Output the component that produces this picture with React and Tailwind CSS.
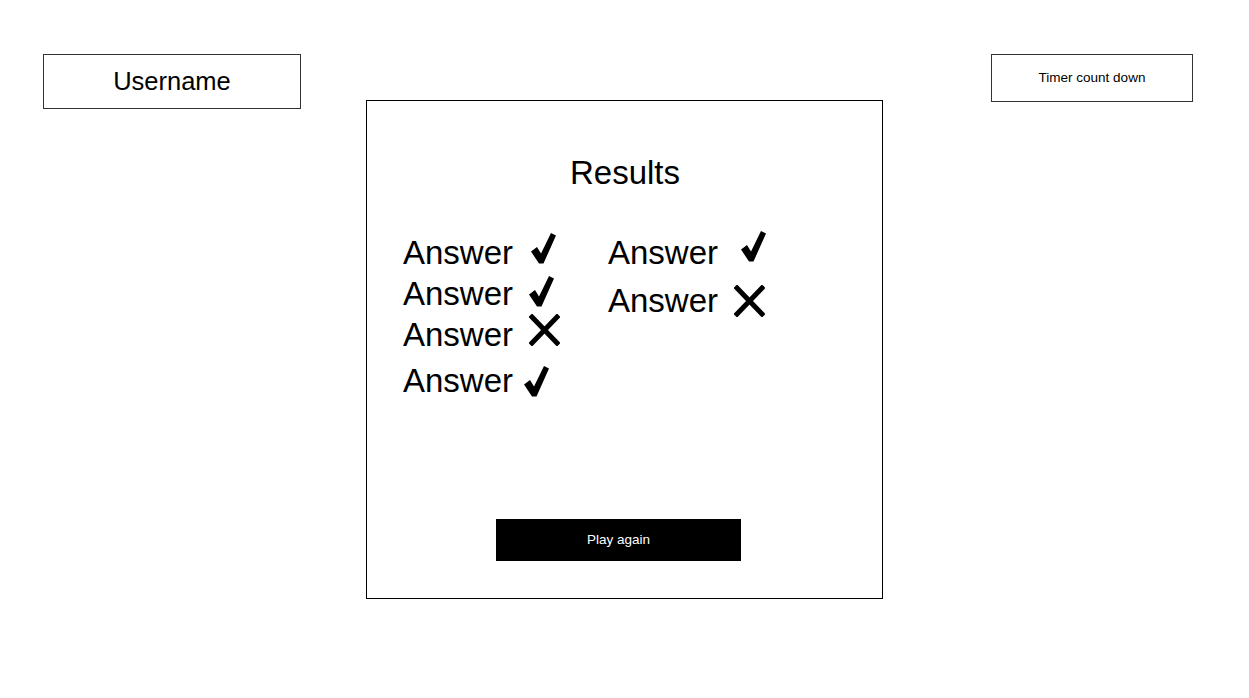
import React from "react";

const Check = () => (
  <svg width="25" height="31" viewBox="0 0 25 31" className="block shrink-0">
    <polygon points="0,18.5 6,14 10,20.5 20,0 25,2.5 12.5,30.5 8,30.5" fill="#000" />
  </svg>
);

const Cross = () => (
  <svg width="31" height="32" viewBox="0 0 31 32" className="block shrink-0">
    <path d="M3 3 L28 29 M28 3 L3 29" stroke="#000" strokeWidth="5" strokeLinecap="square" fill="none" />
  </svg>
);

const Ans = () => (
  <span className="text-[33px] leading-[38px] text-black">Answer</span>
);

export default function App() {
  return (
    <div
      className="w-[1249px] h-[698px] bg-white flex items-start pt-[54px] pl-[43px]"
      style={{ fontFamily: '"Liberation Sans", Arial, sans-serif' }}
    >
      <div className="w-[258px] h-[55px] border border-[#333] flex items-center justify-center shrink-0">
        <span className="text-[25.5px] text-black">Username</span>
      </div>

      <div className="ml-[65px] mt-[46px] w-[517px] h-[499px] border border-black shrink-0 flex flex-col">
        <div className="pt-[53px] text-center text-[33px] leading-[38px] text-black pl-[1px]">Results</div>

        <div className="mt-[42px] flex h-[170px]">
          <div className="pl-[36px] w-[241px] flex flex-col">
            <div className="flex items-start">
              <Ans />
              <div className="ml-[18px] -mt-[1px]"><Check /></div>
            </div>
            <div className="flex items-start mt-[3px]">
              <Ans />
              <div className="ml-[16px] mt-[1px]"><Check /></div>
            </div>
            <div className="flex items-start mt-[3px]">
              <Ans />
              <div className="ml-[16px] -mt-[2px]"><Cross /></div>
            </div>
            <div className="flex items-start mt-[8px]">
              <Ans />
              <div className="ml-[11px] mt-[4px]"><Check /></div>
            </div>
          </div>
          <div className="flex flex-col">
            <div className="flex items-start">
              <Ans />
              <div className="ml-[23px] -mt-[3px]"><Check /></div>
            </div>
            <div className="flex items-start mt-[10px]">
              <Ans />
              <div className="ml-[16px] mt-[3px]"><Cross /></div>
            </div>
          </div>
        </div>

        <button className="mt-[115px] ml-[129px] w-[245px] h-[42px] bg-black text-white text-[13.5px] flex items-center justify-center">
          Play again
        </button>
      </div>

      <div className="ml-[108px] w-[202px] h-[48px] border border-[#333] flex items-center justify-center shrink-0">
        <span className="text-[13.5px] text-black">Timer count down</span>
      </div>
    </div>
  );
}
